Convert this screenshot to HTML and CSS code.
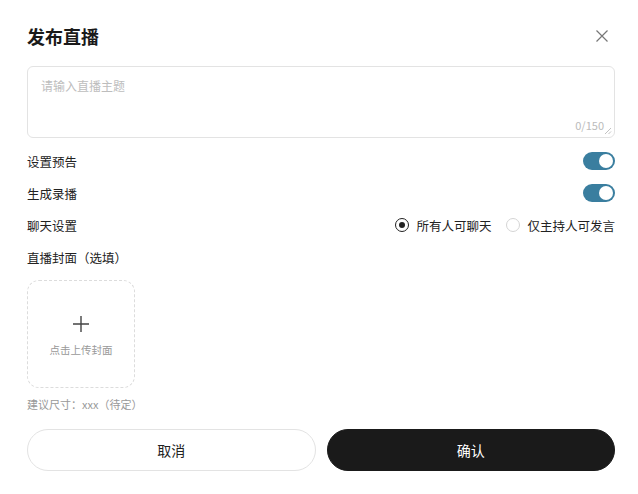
FILE: index.html
```html
<!DOCTYPE html>
<html lang="zh">
<head>
<meta charset="utf-8">
<link rel="stylesheet" href="styles.css">
</head>
<body>
<div class="dialog">
  <div class="header">
    <h1 class="title">发布直播</h1>
    <svg class="close" width="14" height="14" viewBox="0 0 14 14"><path d="M1.5 1.5L12.5 12.5M12.5 1.5L1.5 12.5" stroke="#777" stroke-width="1.2" fill="none"/></svg>
  </div>
  <div class="textarea">
    <div class="placeholder">请输入直播主题</div>
    <div class="counter">0/150</div>
    <svg class="grip" width="8" height="8" viewBox="0 0 8 8"><path d="M7 1L1 7M7 4.5L4.5 7" stroke="#bbb" stroke-width="0.9" fill="none"/></svg>
  </div>
  <div class="row">
    <span class="label">设置预告</span>
    <span class="toggle"><span class="knob"></span></span>
  </div>
  <div class="row">
    <span class="label">生成录播</span>
    <span class="toggle"><span class="knob"></span></span>
  </div>
  <div class="row">
    <span class="label">聊天设置</span>
    <div class="radios">
      <span class="radio checked"><span class="dot"></span></span><span class="rlabel">所有人可聊天</span>
      <span class="radio"></span><span class="rlabel">仅主持人可发言</span>
    </div>
  </div>
  <div class="row">
    <span class="label">直播封面（选填）</span>
  </div>
  <div class="upload">
    <svg width="16" height="16" viewBox="0 0 16 16"><path d="M8 0V16M0 8H16" stroke="#444" stroke-width="1.4"/></svg>
    <span class="upload-text">点击上传封面</span>
  </div>
  <div class="hint">建议尺寸：xxx（待定）</div>
  <div class="buttons">
    <button class="btn cancel">取消</button>
    <button class="btn confirm">确认</button>
  </div>
</div>
</body>
</html>
```
FILE: styles.css
```css
* { box-sizing: border-box; }
html, body { margin: 0; padding: 0; background: #fff; }
body {
  font-family: "Noto Sans CJK SC", "Noto Sans", sans-serif;
  color: #222;
  width: 638px;
  height: 494px;
}
.dialog {
  padding: 20px 23px 0 27px;
  display: flex;
  flex-direction: column;
}
.header {
  display: flex;
  justify-content: space-between;
  align-items: center;
  height: 32px;
}
.title {
  margin: 0;
  font-size: 18px;
  font-weight: 700;
  color: #1a1a1a;
  line-height: 32px;
}
.close { margin-right: 6px; }
.textarea {
  margin-top: 14px;
  height: 72px;
  border: 1px solid #e3e3e3;
  border-radius: 6px;
  position: relative;
  padding: 10px 13px;
}
.placeholder {
  font-size: 12px;
  color: #bdbdbd;
  line-height: 18px;
}
.counter {
  position: absolute;
  right: 10px;
  bottom: 5px;
  font-size: 11px;
  color: #bbb;
  line-height: 14px;
}
.grip { position: absolute; right: 2px; bottom: 2px; }
.row {
  display: flex;
  justify-content: space-between;
  align-items: center;
  height: 32px;
}
.textarea + .row { margin-top: 7px; }
.label { font-size: 12.5px; color: #222; }
.toggle {
  width: 32px;
  height: 18px;
  border-radius: 9px;
  background: #3a7e9f;
  position: relative;
}
.knob {
  position: absolute;
  right: 2px;
  top: 2px;
  width: 14px;
  height: 14px;
  border-radius: 50%;
  background: #fff;
}
.radios { display: flex; align-items: center; }
.radio {
  width: 14px;
  height: 14px;
  border-radius: 50%;
  border: 1px solid #d5d5d5;
  display: flex;
  align-items: center;
  justify-content: center;
  margin-right: 7px;
}
.radio.checked { border: 1.2px solid #222; }
.dot { width: 6px; height: 6px; border-radius: 50%; background: #222; }
.rlabel { font-size: 12.5px; color: #222; margin-right: 15px; }
.rlabel:last-child { margin-right: 0; }
.upload {
  margin-top: 7px;
  width: 108px;
  height: 108px;
  border: 1px dashed #dcdcdc;
  border-radius: 12px;
  display: flex;
  flex-direction: column;
  align-items: center;
  padding-top: 35px;
}
.upload-text {
  margin-top: 10px;
  font-size: 10.5px;
  color: #999;
}
.hint {
  margin-top: 8px;
  font-size: 11px;
  color: #999;
}
.buttons {
  display: flex;
  gap: 11px;
  margin-top: 17px;
}
.btn {
  flex: 1;
  height: 42px;
  border-radius: 21px;
  font-family: "Noto Sans CJK SC", sans-serif;
  font-size: 14px;
  cursor: pointer;
}
.cancel { background: #fff; border: 1px solid #e3e3e3; color: #222; }
.confirm { background: #1a1a1a; border: 1px solid #1a1a1a; color: #fff; }
```
